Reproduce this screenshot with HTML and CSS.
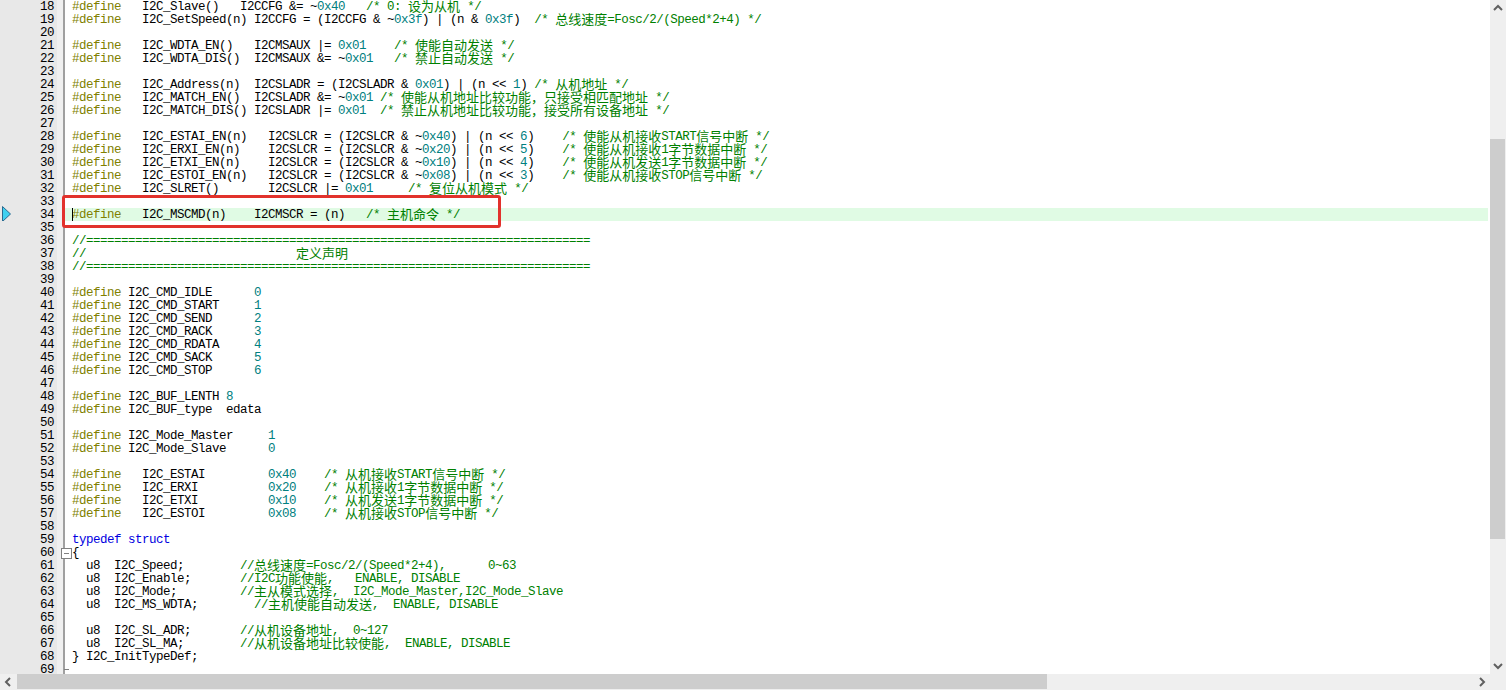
FILE: index.html
```html
<!DOCTYPE html>
<html lang="zh">
<head>
<meta charset="utf-8">
<title>I2C.h</title>
<link rel="stylesheet" href="styles.css">
</head>
<body>
<div class="window">
<div class="main">
<div class="editor">
<div class="row"><div class="ln">18</div><div class="fold"></div><pre class="code"><span class="k">#define</span>   I2C_Slave()   I2CCFG &amp;= ~<span class="n">0x40</span>   <span class="c">/* 0: <span class="z">设为从机</span> */</span></pre></div>
<div class="row"><div class="ln">19</div><div class="fold"></div><pre class="code"><span class="k">#define</span>   I2C_SetSpeed(n) I2CCFG = (I2CCFG &amp; ~<span class="n">0x3f</span>) | (n &amp; <span class="n">0x3f</span>)  <span class="c">/* <span class="z">总线速度</span>=Fosc/2/(Speed*2+4) */</span></pre></div>
<div class="row"><div class="ln">20</div><div class="fold"></div><pre class="code"></pre></div>
<div class="row"><div class="ln">21</div><div class="fold"></div><pre class="code"><span class="k">#define</span>   I2C_WDTA_EN()   I2CMSAUX |= <span class="n">0x01</span>    <span class="c">/* <span class="z">使能自动发送</span> */</span></pre></div>
<div class="row"><div class="ln">22</div><div class="fold"></div><pre class="code"><span class="k">#define</span>   I2C_WDTA_DIS()  I2CMSAUX &amp;= ~<span class="n">0x01</span>   <span class="c">/* <span class="z">禁止自动发送</span> */</span></pre></div>
<div class="row"><div class="ln">23</div><div class="fold"></div><pre class="code"></pre></div>
<div class="row"><div class="ln">24</div><div class="fold"></div><pre class="code"><span class="k">#define</span>   I2C_Address(n)  I2CSLADR = (I2CSLADR &amp; <span class="n">0x01</span>) | (n &lt;&lt; <span class="n">1</span>) <span class="c">/* <span class="z">从机地址</span> */</span></pre></div>
<div class="row"><div class="ln">25</div><div class="fold"></div><pre class="code"><span class="k">#define</span>   I2C_MATCH_EN()  I2CSLADR &amp;= ~<span class="n">0x01</span> <span class="c">/* <span class="z">使能从机地址比较功能，只接受相匹配地址</span> */</span></pre></div>
<div class="row"><div class="ln">26</div><div class="fold"></div><pre class="code"><span class="k">#define</span>   I2C_MATCH_DIS() I2CSLADR |= <span class="n">0x01</span>  <span class="c">/* <span class="z">禁止从机地址比较功能，接受所有设备地址</span> */</span></pre></div>
<div class="row"><div class="ln">27</div><div class="fold"></div><pre class="code"></pre></div>
<div class="row"><div class="ln">28</div><div class="fold"></div><pre class="code"><span class="k">#define</span>   I2C_ESTAI_EN(n)   I2CSLCR = (I2CSLCR &amp; ~<span class="n">0x40</span>) | (n &lt;&lt; <span class="n">6</span>)    <span class="c">/* <span class="z">使能从机接收</span>START<span class="z">信号中断</span> */</span></pre></div>
<div class="row"><div class="ln">29</div><div class="fold"></div><pre class="code"><span class="k">#define</span>   I2C_ERXI_EN(n)    I2CSLCR = (I2CSLCR &amp; ~<span class="n">0x20</span>) | (n &lt;&lt; <span class="n">5</span>)    <span class="c">/* <span class="z">使能从机接收</span>1<span class="z">字节数据中断</span> */</span></pre></div>
<div class="row"><div class="ln">30</div><div class="fold"></div><pre class="code"><span class="k">#define</span>   I2C_ETXI_EN(n)    I2CSLCR = (I2CSLCR &amp; ~<span class="n">0x10</span>) | (n &lt;&lt; <span class="n">4</span>)    <span class="c">/* <span class="z">使能从机发送</span>1<span class="z">字节数据中断</span> */</span></pre></div>
<div class="row"><div class="ln">31</div><div class="fold"></div><pre class="code"><span class="k">#define</span>   I2C_ESTOI_EN(n)   I2CSLCR = (I2CSLCR &amp; ~<span class="n">0x08</span>) | (n &lt;&lt; <span class="n">3</span>)    <span class="c">/* <span class="z">使能从机接收</span>STOP<span class="z">信号中断</span> */</span></pre></div>
<div class="row"><div class="ln">32</div><div class="fold"></div><pre class="code"><span class="k">#define</span>   I2C_SLRET()       I2CSLCR |= <span class="n">0x01</span>     <span class="c">/* <span class="z">复位从机模式</span> */</span></pre></div>
<div class="row"><div class="ln">33</div><div class="fold"></div><pre class="code"></pre></div>
<div class="row"><div class="ln">34<svg class="marker" width="9" height="16" viewBox="0 0 9 16"><path d="M.5.5 8.5 8 .5 15.5Z" fill="#3fd0f0" stroke="#2a6a90"/></svg></div><div class="fold"></div><pre class="code current"><span class="caret"></span><span class="k">#define</span>   I2C_MSCMD(n)    I2CMSCR = (n)   <span class="c">/* <span class="z">主机命令</span> */</span></pre></div>
<div class="row"><div class="ln">35</div><div class="fold"></div><pre class="code"></pre></div>
<div class="row"><div class="ln">36</div><div class="fold"></div><pre class="code"><span class="c">//========================================================================</span></pre></div>
<div class="row"><div class="ln">37</div><div class="fold"></div><pre class="code"><span class="c">//                              <span class="z">定义声明</span></span></pre></div>
<div class="row"><div class="ln">38</div><div class="fold"></div><pre class="code"><span class="c">//========================================================================</span></pre></div>
<div class="row"><div class="ln">39</div><div class="fold"></div><pre class="code"></pre></div>
<div class="row"><div class="ln">40</div><div class="fold"></div><pre class="code"><span class="k">#define</span> I2C_CMD_IDLE      <span class="n">0</span></pre></div>
<div class="row"><div class="ln">41</div><div class="fold"></div><pre class="code"><span class="k">#define</span> I2C_CMD_START     <span class="n">1</span></pre></div>
<div class="row"><div class="ln">42</div><div class="fold"></div><pre class="code"><span class="k">#define</span> I2C_CMD_SEND      <span class="n">2</span></pre></div>
<div class="row"><div class="ln">43</div><div class="fold"></div><pre class="code"><span class="k">#define</span> I2C_CMD_RACK      <span class="n">3</span></pre></div>
<div class="row"><div class="ln">44</div><div class="fold"></div><pre class="code"><span class="k">#define</span> I2C_CMD_RDATA     <span class="n">4</span></pre></div>
<div class="row"><div class="ln">45</div><div class="fold"></div><pre class="code"><span class="k">#define</span> I2C_CMD_SACK      <span class="n">5</span></pre></div>
<div class="row"><div class="ln">46</div><div class="fold"></div><pre class="code"><span class="k">#define</span> I2C_CMD_STOP      <span class="n">6</span></pre></div>
<div class="row"><div class="ln">47</div><div class="fold"></div><pre class="code"></pre></div>
<div class="row"><div class="ln">48</div><div class="fold"></div><pre class="code"><span class="k">#define</span> I2C_BUF_LENTH <span class="n">8</span></pre></div>
<div class="row"><div class="ln">49</div><div class="fold"></div><pre class="code"><span class="k">#define</span> I2C_BUF_type  edata</pre></div>
<div class="row"><div class="ln">50</div><div class="fold"></div><pre class="code"></pre></div>
<div class="row"><div class="ln">51</div><div class="fold"></div><pre class="code"><span class="k">#define</span> I2C_Mode_Master     <span class="n">1</span></pre></div>
<div class="row"><div class="ln">52</div><div class="fold"></div><pre class="code"><span class="k">#define</span> I2C_Mode_Slave      <span class="n">0</span></pre></div>
<div class="row"><div class="ln">53</div><div class="fold"></div><pre class="code"></pre></div>
<div class="row"><div class="ln">54</div><div class="fold"></div><pre class="code"><span class="k">#define</span>   I2C_ESTAI         <span class="n">0x40</span>    <span class="c">/* <span class="z">从机接收</span>START<span class="z">信号中断</span> */</span></pre></div>
<div class="row"><div class="ln">55</div><div class="fold"></div><pre class="code"><span class="k">#define</span>   I2C_ERXI          <span class="n">0x20</span>    <span class="c">/* <span class="z">从机接收</span>1<span class="z">字节数据中断</span> */</span></pre></div>
<div class="row"><div class="ln">56</div><div class="fold"></div><pre class="code"><span class="k">#define</span>   I2C_ETXI          <span class="n">0x10</span>    <span class="c">/* <span class="z">从机发送</span>1<span class="z">字节数据中断</span> */</span></pre></div>
<div class="row"><div class="ln">57</div><div class="fold"></div><pre class="code"><span class="k">#define</span>   I2C_ESTOI         <span class="n">0x08</span>    <span class="c">/* <span class="z">从机接收</span>STOP<span class="z">信号中断</span> */</span></pre></div>
<div class="row"><div class="ln">58</div><div class="fold"></div><pre class="code"></pre></div>
<div class="row"><div class="ln">59</div><div class="fold"></div><pre class="code"><span class="b">typedef</span> <span class="b">struct</span></pre></div>
<div class="row"><div class="ln">60</div><div class="fold open"></div><pre class="code">{</pre></div>
<div class="row"><div class="ln">61</div><div class="fold"></div><pre class="code">  u8  I2C_Speed;        <span class="c">//<span class="z">总线速度</span>=Fosc/2/(Speed*2+4),      0~63</span></pre></div>
<div class="row"><div class="ln">62</div><div class="fold"></div><pre class="code">  u8  I2C_Enable;       <span class="c">//I2C<span class="z">功能使能</span>,   ENABLE, DISABLE</span></pre></div>
<div class="row"><div class="ln">63</div><div class="fold"></div><pre class="code">  u8  I2C_Mode;         <span class="c">//<span class="z">主从模式选择</span>,  I2C_Mode_Master,I2C_Mode_Slave</span></pre></div>
<div class="row"><div class="ln">64</div><div class="fold"></div><pre class="code">  u8  I2C_MS_WDTA;        <span class="c">//<span class="z">主机使能自动发送</span>,  ENABLE, DISABLE</span></pre></div>
<div class="row"><div class="ln">65</div><div class="fold"></div><pre class="code"></pre></div>
<div class="row"><div class="ln">66</div><div class="fold"></div><pre class="code">  u8  I2C_SL_ADR;       <span class="c">//<span class="z">从机设备地址</span>,  0~127</span></pre></div>
<div class="row"><div class="ln">67</div><div class="fold"></div><pre class="code">  u8  I2C_SL_MA;        <span class="c">//<span class="z">从机设备地址比较使能</span>,  ENABLE, DISABLE</span></pre></div>
<div class="row"><div class="ln">68</div><div class="fold"></div><pre class="code">} I2C_InitTypeDef;</pre></div>
<div class="row"><div class="ln">69</div><div class="fold end"></div><pre class="code"></pre></div>
<div class="callout"></div>
</div>
<div class="vbar">
<svg class="arrow" width="16" height="16" viewBox="0 0 16 16"><path d="M4 10 8 6l4 4" fill="none" stroke="#606060" stroke-width="2"/></svg>
<div class="vtrack"><div class="vthumb"></div></div>
<svg class="arrow" width="16" height="16" viewBox="0 0 16 16"><path d="M4 6l4 4 4-4" fill="none" stroke="#606060" stroke-width="2"/></svg>
</div>
</div>
<div class="hbar">
<svg class="arrow" width="17" height="16" viewBox="0 0 17 16"><path d="M10 4 6 8l4 4" fill="none" stroke="#606060" stroke-width="2"/></svg>
<div class="htrack"><div class="hthumb"></div></div>
<svg class="arrow" width="17" height="16" viewBox="0 0 17 16"><path d="M7 4l4 4-4 4" fill="none" stroke="#606060" stroke-width="2"/></svg>
<div class="corner"></div>
</div>
</div>
</body>
</html>
```
FILE: styles.css
```css
* { box-sizing: border-box; }
html, body { margin: 0; height: 100%; overflow: hidden; background: #fff; }
.window { display: flex; flex-direction: column; width: 1506px; height: 690px; }
.main { display: flex; flex: 1; min-height: 0; }
.editor { position: relative; flex: 1; overflow: hidden; background: #fff; font: 12.5px/13px "Liberation Mono", monospace; letter-spacing: -0.5px; color: #000; }
.row { display: flex; height: 13px; }
.ln { position: relative; width: 57px; padding: 1px 3px 0 0; text-align: right; background: #e8e8e8; color: #000; }
.fold { position: relative; width: 8px; background: #f0f0f0; border-right: 2px solid #a0a0a0; }
.fold.open::before { content: ""; position: absolute; left: 4px; top: 2px; width: 9px; height: 9px; background: #fff linear-gradient(#808080, #808080) center / 5px 1px no-repeat; border: 1px solid #808080; }
.fold.end { border-right: 0; background: linear-gradient(#f0f0f0, #f0f0f0) left / 6px 100% no-repeat, linear-gradient(#a0a0a0, #a0a0a0) left 6px top / 2px 100% no-repeat; }
.fold.end::after { content: ""; position: absolute; left: 7px; top: 6px; width: 5px; height: 1px; background: #808080; }
.code { position: relative; flex: 1; margin: 0 2px 0 0; padding: 1px 0 0 7px; font: inherit; white-space: pre; }
.current { background: #e0fbe4; }
.k { color: #808000; }
.c { color: #008000; }
.n { color: #008080; }
.b { color: #0000e0; }
.z { font-family: "Noto Sans CJK SC", sans-serif; font-size: 13px; letter-spacing: 0; line-height: 0; vertical-align: -1px; }
.caret { position: absolute; left: 7px; top: 0; width: 1px; height: 13px; background: #000; }
.marker { position: absolute; left: 2px; top: -2px; }
.callout { position: absolute; left: 62px; top: 195px; width: 439px; height: 33px; border: 3px solid #e2322c; border-radius: 3px; }
.vbar { display: flex; flex-direction: column; width: 16px; background: #efefef; }
.vtrack { flex: 1; padding-top: 123px; }
.vthumb { width: 15px; height: 400px; background: #cdcdcd; }
.arrow { display: block; flex: none; }
.hbar { display: flex; flex: none; height: 16px; background: #efefef; }
.htrack { flex: 1; }
.hthumb { width: 1030px; height: 15px; background: #cdcdcd; }
.corner { width: 16px; flex: none; }
```
